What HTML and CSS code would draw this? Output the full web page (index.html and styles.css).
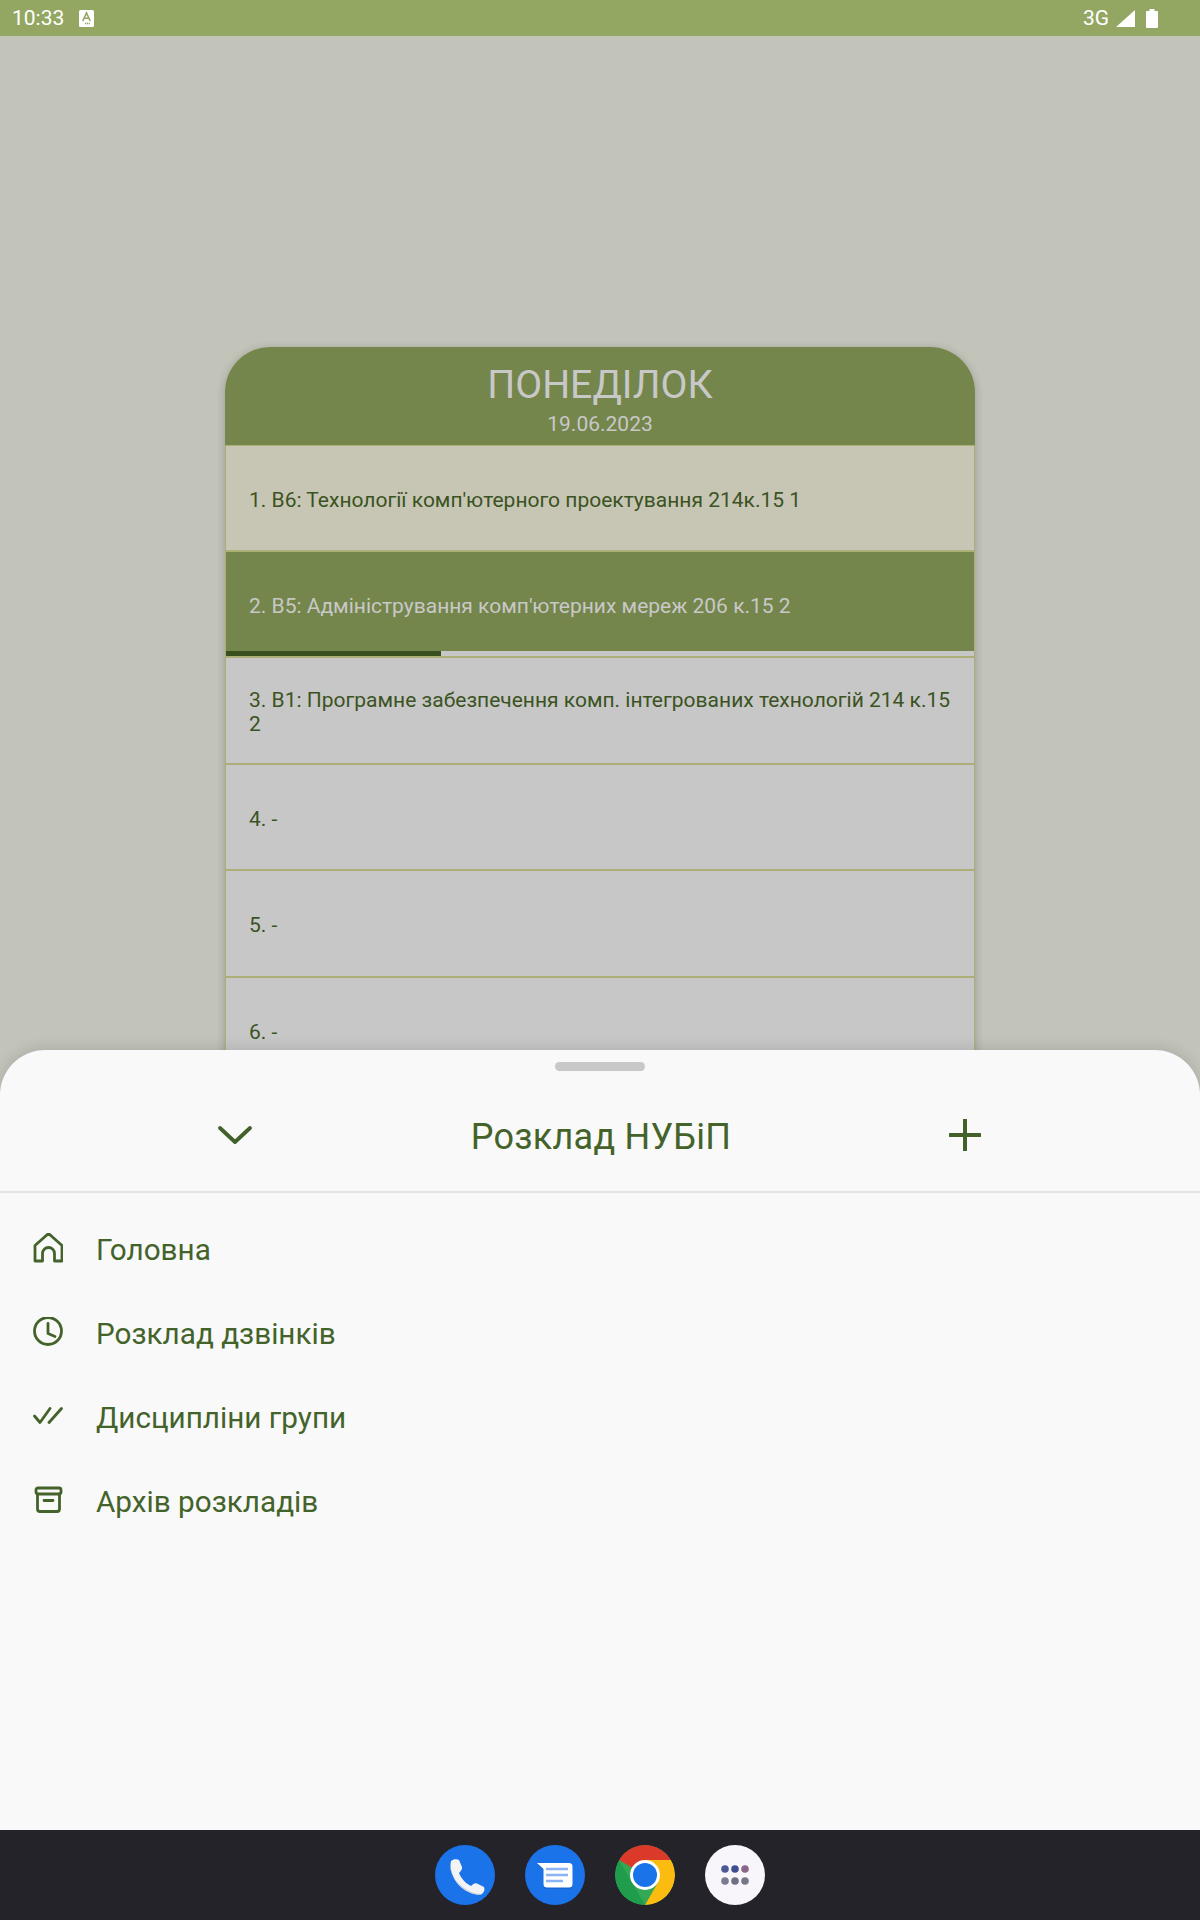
FILE: index.html
```html
<!DOCTYPE html>
<html>
<head>
  <title>Розклад НУБіП</title>
  <link rel="stylesheet" href="styles.css">
</head>
<body>
  <div class="screen">
    <div class="status-bar">
      <span class="status-time">10:33</span>
      <svg class="status-a" viewBox="0 0 15 17" width="15" height="17">
        <rect width="15" height="17" rx="1.5" fill="#fff"/>
        <path d="M3.8 11 L7.5 3 L11.2 11 M5.2 8.2 H9.8" fill="none" stroke="#94a762" stroke-width="1.6"/>
        <path d="M6 13.5 H11" stroke="#94a762" stroke-width="1.4" stroke-dasharray="1.2 .6"/>
      </svg>
      <span class="status-fill"></span>
      <span class="status-net">3G</span>
      <svg class="status-signal" viewBox="0 0 19 17" width="19" height="17">
        <path d="M19 0 V17 H0 Z" fill="#fff"/>
      </svg>
      <svg class="status-battery" viewBox="0 0 12 19" width="12" height="19">
        <path d="M3.5 0 H8.5 V2 H11 a1 1 0 0 1 1 1 V18 a1 1 0 0 1 -1 1 H1 a1 1 0 0 1 -1 -1 V3 a1 1 0 0 1 1 -1 H3.5 Z" fill="#fff"/>
      </svg>
    </div>

    <div class="stage">
      <div class="day-card">
        <div class="day-head">
          <div class="day-name">ПОНЕДІЛОК</div>
          <div class="day-date">19.06.2023</div>
        </div>
        <div class="lesson lesson-past"><span class="lesson-text">1. В6: Технології комп'ютерного проектування 214к.15 1</span></div>
        <div class="lesson lesson-now">
          <span class="lesson-text">2. В5: Адміністрування комп'ютерних мереж 206 к.15 2</span>
          <div class="progress"><div class="progress-bar" style="width: 28.8%"></div></div>
        </div>
        <div class="lesson"><span class="lesson-text">3. В1: Програмне забезпечення комп. інтегрованих технологій 214 к.15 2</span></div>
        <div class="lesson"><span class="lesson-text">4. -</span></div>
        <div class="lesson"><span class="lesson-text">5. -</span></div>
        <div class="lesson"><span class="lesson-text">6. -</span></div>
      </div>

      <div class="sheet">
        <div class="handle"></div>
        <div class="sheet-head">
          <svg viewBox="0 0 36 20" width="36" height="20">
            <path d="M3 3 L18 17 L33 3" fill="none" stroke="#41602a" stroke-width="3.8" stroke-linecap="round" stroke-linejoin="round"/>
          </svg>
          <span class="sheet-title">Розклад НУБіП</span>
          <svg viewBox="0 0 32 32" width="32" height="32">
            <path d="M16 1 V31 M1 16 H31" fill="none" stroke="#41602a" stroke-width="4" stroke-linecap="round"/>
          </svg>
        </div>
        <div class="menu">
          <div class="menu-item">
            <svg class="menu-icon" viewBox="0 0 30 30">
              <path d="M2 12.500 L15.500 0.500 L29 12.500 V28 H21.500 V20.500 a6 6 0 0 0 -12 0 V28 H2 Z" />
            </svg>
            <span>Головна</span>
          </div>
          <div class="menu-item">
            <svg class="menu-icon" viewBox="0 0 30 30">
              <circle cx="15" cy="14" r="13.500"/>
              <path d="M15 6.500 V16.500 L22 19.500"/>
            </svg>
            <span>Розклад дзвінків</span>
          </div>
          <div class="menu-item">
            <svg class="menu-icon" viewBox="0 0 30 30">
              <path d="M1.500 15 L7 21.500 L17 7.500 M16 21.500 L28.500 7.500"/>
            </svg>
            <span>Дисципліни групи</span>
          </div>
          <div class="menu-item">
            <svg class="menu-icon" viewBox="0 0 30 30">
              <rect x="3" y="3" width="25" height="6" rx="2"/>
              <path d="M4.500 9 V24 a2.500 2.500 0 0 0 2.500 2.500 H24 a2.500 2.500 0 0 0 2.500 -2.500 V9 M11 15.500 H20"/>
            </svg>
            <span>Архів розкладів</span>
          </div>
        </div>
      </div>
    </div>

    <div class="nav-bar">
      <div class="app app-blue">
        <svg viewBox="0 0 60 60" width="60" height="60">
          <path d="M16 16 C18 14 22 13.500 24 15 L27 22 C27.500 24 26 26 24 28 C26 33 30 38 36 41 C38 39 40 37.500 42 38.500 L49 42 C50 44 49.500 47 47 49 C42 51 33 48 26 42 C19 36 14 25 16 16 Z" fill="#f1f3f4"/>
          <path d="M16 16 C15 20 15 24 16.500 28 C20 36 28 44 38 47.500 C42 49 45 49 47 49 C42 51 33 48 26 42 C19 36 14 25 16 16 Z" fill="#cfd4da"/>
        </svg>
      </div>
      <div class="app app-blue">
        <svg viewBox="0 0 60 60" width="60" height="60">
          <path d="M12 18 H44 a3.500 3.500 0 0 1 3.500 3.500 V39 a3.500 3.500 0 0 1 -3.500 3.500 H22 a3.500 3.500 0 0 1 -3.500 -3.500 V24 Z" fill="#174ea6" opacity=".35" transform="translate(0 1.500)"/>
          <path d="M12 18 H44 a3.500 3.500 0 0 1 3.500 3.500 V39 a3.500 3.500 0 0 1 -3.500 3.500 H22 a3.500 3.500 0 0 1 -3.500 -3.500 V24 Z" fill="#fff"/>
          <path d="M21 24 H43 M21 30 H43 M21 36 H38" stroke="#8ab4f8" stroke-width="2.600"/>
        </svg>
      </div>
      <div class="app">
        <svg viewBox="0 0 60 60" width="60" height="60">
          <circle cx="30" cy="30" r="30" fill="#34a853"/>
          <path d="M30 30 L4 15 A30 30 0 0 1 56 15 L30 15 Z" fill="#db3a2a"/>
          <path d="M30 15 H56 A30 30 0 0 1 30 60 L43 37.500 Z" fill="#fbbc0f"/>
          <path d="M4 15 L17 37.500 L30 60 A30 30 0 0 1 4 15 Z" fill="#1f9d4d"/>
          <circle cx="30" cy="30" r="15" fill="#fff"/>
          <circle cx="30" cy="30" r="12" fill="#1a73e8"/>
        </svg>
      </div>
      <div class="app app-white">
        <svg viewBox="0 0 60 60" width="60" height="60">
          <circle cx="20" cy="24" r="3.800" fill="#4a5a94"/>
          <circle cx="30" cy="24" r="3.800" fill="#3f5092"/>
          <circle cx="40" cy="24" r="3.800" fill="#8a6688"/>
          <circle cx="20" cy="36" r="3.800" fill="#7b7b8f"/>
          <circle cx="30" cy="36" r="3.800" fill="#6f7086"/>
          <circle cx="40" cy="36" r="3.800" fill="#77778a"/>
        </svg>
      </div>
    </div>
  </div>
</body>
</html>
```

FILE: styles.css
```css
body {
  margin: 0;
  padding: 0;
  font-family: "Roboto", sans-serif;
}

.screen {
  display: flex;
  flex-direction: column;
  width: 1200px;
  height: 1920px;
  overflow: hidden;
}

/* status bar */
.status-bar {
  display: flex;
  align-items: center;
  height: 36px;
  padding: 0 42px 0 12px;
  background-color: #94a762;
  color: #fff;
  font-size: 21px;
}

.status-a {
  margin-left: 15px;
}

.status-fill {
  flex: 1;
}

.status-signal {
  margin-left: 7px;
}

.status-battery {
  margin-left: 11px;
}

/* page behind the sheet */
.stage {
  position: relative;
  flex: 1;
  padding-top: 311px;
  background-color: #c2c3b9;
  overflow: hidden;
}

.day-card {
  width: 750px;
  margin: 0 auto;
  border-radius: 45px 45px 0 0;
  box-shadow: 0 2px 10px rgba(0, 0, 0, 0.22);
  overflow: hidden;
}

.day-head {
  height: 98px;
  box-sizing: border-box;
  padding-top: 16px;
  background-color: #74864b;
  color: #c8c8c8;
  text-align: center;
}

.day-name {
  font-size: 39.2px;
  line-height: 44px;
}

.day-date {
  margin-top: 5px;
  font-size: 21px;
  line-height: 24px;
}

.lesson {
  position: relative;
  display: flex;
  align-items: center;
  box-sizing: border-box;
  height: 106.5px;
  padding: 0 23px;
  border: 1px solid #acb077;
  border-top-width: 0;
  border-bottom-width: 2px;
  background-color: #c7c7c7;
  color: #3b5322;
  font-size: 21px;
  line-height: 24px;
}

.lesson-text {
  margin-top: 4px;
}

.lesson-past {
  background-color: #c7c6b5;
  border-top-width: 1px;
}

.lesson-now {
  background-color: #74864b;
  color: #c8c8c8;
}

.progress {
  position: absolute;
  left: 0;
  right: 0;
  bottom: 0;
  height: 5px;
  background-color: #c7c7c7;
}

.progress-bar {
  height: 100%;
  background-color: #38501e;
}

/* bottom sheet */
.sheet {
  position: absolute;
  left: 0;
  right: 0;
  bottom: 0;
  height: 780px;
  border-radius: 45px 45px 0 0;
  background-color: #f9f9f9;
  box-shadow: 0 -2px 14px rgba(0, 0, 0, 0.12);
  color: #44632a;
}

.handle {
  width: 90px;
  height: 9px;
  margin: 12px auto 0;
  border-radius: 5px;
  background-color: #c8c8c8;
}

.sheet-head {
  display: flex;
  align-items: center;
  justify-content: space-between;
  box-sizing: content-box;
  height: 112px;
  padding: 8px 219px 0 217px;
  border-bottom: 2px solid #e4e4e4;
}

.sheet-title {
  margin-top: 4px;
  font-size: 36px;
  letter-spacing: 0.25px;
}

.menu {
  padding-top: 14px;
}

.menu-item {
  display: flex;
  align-items: center;
  gap: 33px;
  height: 84px;
  padding-left: 33px;
  font-size: 29.7px;
}

.menu-icon {
  position: relative;
  top: -1px;
  width: 30px;
  height: 30px;
  fill: none;
  stroke: #44632a;
  stroke-width: 2.8;
  stroke-linejoin: round;
  stroke-linecap: round;
}

/* navigation bar */
.nav-bar {
  display: flex;
  align-items: center;
  justify-content: center;
  gap: 30px;
  height: 90px;
  background-color: #242329;
}

.app {
  width: 60px;
  height: 60px;
  border-radius: 50%;
  overflow: hidden;
}

.app-blue {
  background-color: #1a73e8;
}

.app-white {
  background-color: #f8f6fb;
}
```
